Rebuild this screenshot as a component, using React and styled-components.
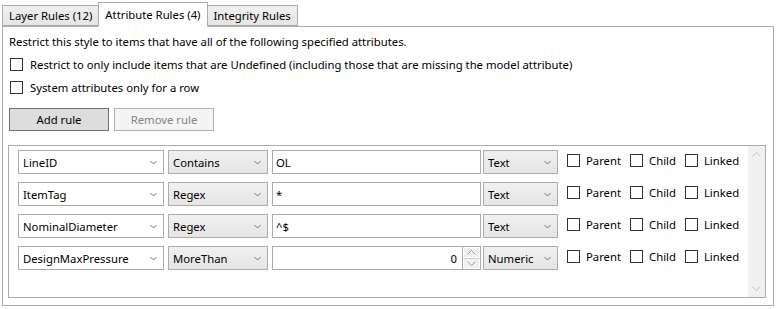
import React from 'react';
import styled, {createGlobalStyle} from 'styled-components';

const GlobalStyle = createGlobalStyle`
    body {
        margin: 0;
        background: #ffffff;
        font-family: 'Noto Sans', 'Open Sans', sans-serif;
        font-size: 11.3px;
        color: #000000;
    }
`

const Window = styled.div`
    width: 778px;
    height: 309px;
    padding: 2px 0 0 2px;
    box-sizing: border-box;
`

const TabStrip = styled.div`
    display: flex;
    align-items: flex-end;
    height: 24px;
    position: relative;
    z-index: 1;
`

const Tab = styled.div`
    box-sizing: border-box;
    padding: 0 6px;
    display: flex;
    align-items: center;
    border: 1px solid #acacac;
    border-bottom: ${p => p.$active ? '1px solid #ffffff' : '1px solid #acacac'};
    margin-bottom: ${p => p.$active ? '-1px' : '0'};
    height: ${p => p.$active ? '25px' : '21px'};
    background: ${p => p.$active ? '#ffffff' : 'linear-gradient(#f0f0f0, #e5e5e5)'};
    margin-left: ${p => p.$first ? '0' : '-1px'};
    white-space: nowrap;
`

const Panel = styled.div`
    box-sizing: border-box;
    width: 772px;
    height: 280px;
    border: 1px solid #acacac;
    padding: 7px 6px 6px 5px;
    display: flex;
    flex-direction: column;
`

const Intro = styled.div`
    height: 16px;
    line-height: 16px;
    padding-left: 1px;
`

const OptionList = styled.div`
    display: flex;
    flex-direction: column;
    gap: 7px;
    margin-top: 6px;
    padding-left: 2px;
`

const CheckRow = styled.label`
    display: flex;
    align-items: center;
    gap: 7px;
    height: 16px;
`

const Box = styled.span`
    box-sizing: border-box;
    width: 13px;
    height: 13px;
    border: 1px solid #333333;
    background: #ffffff;
    flex: none;
`

const ButtonBar = styled.div`
    display: flex;
    gap: 5px;
    margin-top: 13px;
    padding-left: 1px;
`

const Button = styled.div`
    box-sizing: border-box;
    width: 100px;
    height: 23px;
    display: flex;
    align-items: center;
    justify-content: center;
    border: 1px solid ${p => p.$disabled ? '#adb2b5' : '#707070'};
    background: ${p => p.$disabled ? '#f4f4f4' : '#dddddd'};
    color: ${p => p.$disabled ? '#838383' : '#000000'};
`

const ListBox = styled.div`
    box-sizing: border-box;
    width: 758px;
    height: 153px;
    margin-top: 14px;
    border: 1px solid #acacac;
    display: flex;
`

const Rows = styled.div`
    flex: 1;
    display: flex;
    flex-direction: column;
    gap: 8px;
    padding: 4px 0 0 9px;
`

const Row = styled.div`
    display: flex;
    align-items: center;
    height: 24px;
`

const Combo = styled.div`
    box-sizing: border-box;
    width: ${p => p.$width}px;
    height: 24px;
    margin-right: ${p => p.$gap ?? 4}px;
    border: 1px solid #acacac;
    background: ${p => p.$editable ? '#ffffff' : 'linear-gradient(#f0f0f0, #e5e5e5)'};
    display: flex;
    align-items: center;
    padding: 0 6px 0 4px;
    justify-content: space-between;
`

const Chevron = () => (
    <svg width="7" height="5" viewBox="0 0 7 5">
        <path d="M0.5 1 L3.5 4 L6.5 1" fill="none" stroke="#707070" strokeWidth="1"/>
    </svg>
)

const TextBox = styled.div`
    box-sizing: border-box;
    width: 209px;
    height: 24px;
    margin-right: 2px;
    border: 1px solid #acacac;
    background: #ffffff;
    display: flex;
    align-items: center;
    padding-left: 3px;
`

const SpinBox = styled(TextBox)`
    padding: 0;
    justify-content: flex-end;
`

const SpinValue = styled.span`
    padding-right: 5px;
`

const SpinButtons = styled.div`
    width: 17px;
    height: 22px;
    display: flex;
    flex-direction: column;
    border-left: 1px solid #acacac;
`

const SpinButton = styled.div`
    flex: 1;
    display: flex;
    align-items: center;
    justify-content: center;
    background: #f0f0f0;
    border: 1px solid #ffffff;
    & + & {
        border-top: 1px solid #d0d0d0;
    }
`

const Flags = styled.div`
    display: flex;
    align-items: center;
    margin-left: 9px;
    gap: 9px;
`

const Flag = styled.label`
    display: flex;
    align-items: center;
    gap: 6px;
    height: 16px;
    margin-top: -3px;
`

const ScrollBar = styled.div`
    width: 17px;
    background: #f0f0f0;
    display: flex;
    flex-direction: column;
    justify-content: space-between;
    align-items: center;
    padding: 6px 0;
`

const Arrow = ({down}) => (
    <svg width="9" height="5" viewBox="0 0 9 5">
        <path d={down ? 'M0.5 0.5 L4.5 4.5 L8.5 0.5' : 'M0.5 4.5 L4.5 0.5 L8.5 4.5'} fill="none" stroke="#c2c2c2" strokeWidth="1"/>
    </svg>
)

const SpinArrow = ({down}) => (
    <svg width="9" height="5" viewBox="0 0 9 5">
        <path d={down ? 'M0.5 0.5 L4.5 4.5 L8.5 0.5' : 'M0.5 4.5 L4.5 0.5 L8.5 4.5'} fill="none" stroke="#9a9a9a" strokeWidth="1"/>
    </svg>
)

const RULES = [
    {attribute: 'LineID', op: 'Contains', value: 'OL', type: 'Text'},
    {attribute: 'ItemTag', op: 'Regex', value: '*', type: 'Text'},
    {attribute: 'NominalDiameter', op: 'Regex', value: '^$', type: 'Text'},
    {attribute: 'DesignMaxPressure', op: 'MoreThan', value: '0', type: 'Numeric', numeric: true},
]

const App = () => {
    return (
        <Window>
            <GlobalStyle/>
            <TabStrip>
                <Tab $first>Layer Rules (12)</Tab>
                <Tab $active>Attribute Rules (4)</Tab>
                <Tab>Integrity Rules</Tab>
            </TabStrip>
            <Panel>
                <Intro>Restrict this style to items that have all of the following specified attributes.</Intro>
                <OptionList>
                    <CheckRow><Box/>Restrict to only include items that are Undefined (including those that are missing the model attribute)</CheckRow>
                    <CheckRow><Box/>System attributes only for a row</CheckRow>
                </OptionList>
                <ButtonBar>
                    <Button>Add rule</Button>
                    <Button $disabled>Remove rule</Button>
                </ButtonBar>
                <ListBox>
                    <Rows>
                        {RULES.map(rule => (
                            <Row key={rule.attribute}>
                                <Combo $width={146} $editable>{rule.attribute}<Chevron/></Combo>
                                <Combo $width={100}>{rule.op}<Chevron/></Combo>
                                {rule.numeric ? (
                                    <SpinBox>
                                        <SpinValue>{rule.value}</SpinValue>
                                        <SpinButtons>
                                            <SpinButton><SpinArrow/></SpinButton>
                                            <SpinButton><SpinArrow down/></SpinButton>
                                        </SpinButtons>
                                    </SpinBox>
                                ) : (
                                    <TextBox>{rule.value}</TextBox>
                                )}
                                <Combo $width={75} $gap={0}>{rule.type}<Chevron/></Combo>
                                <Flags>
                                    <Flag><Box/>Parent</Flag>
                                    <Flag><Box/>Child</Flag>
                                    <Flag><Box/>Linked</Flag>
                                </Flags>
                            </Row>
                        ))}
                    </Rows>
                    <ScrollBar>
                        <Arrow/>
                        <Arrow down/>
                    </ScrollBar>
                </ListBox>
            </Panel>
        </Window>
    );
}

export default App;
